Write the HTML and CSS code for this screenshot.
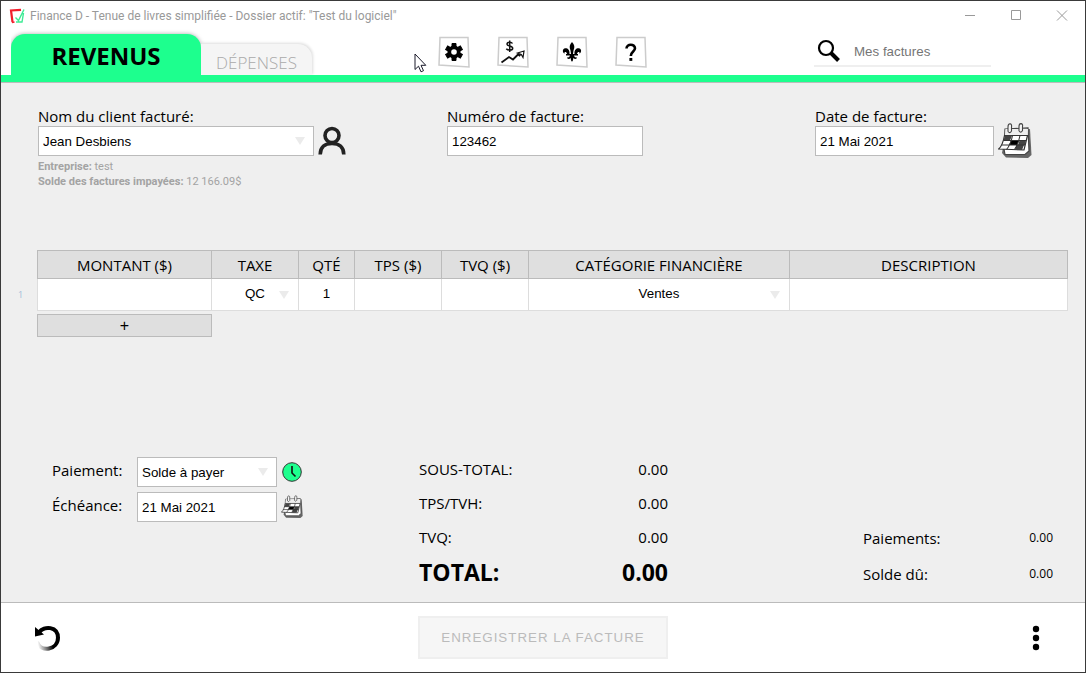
FILE: index.html
```html
<!DOCTYPE html>
<html lang="fr">
<head>
<meta charset="utf-8">
<title>Finance D - Tenue de livres simplifiée</title>
<link rel="stylesheet" href="styles.css">
</head>
<body>
<svg width="0" height="0" class="defs" aria-hidden="true">
  <symbol id="calendar" viewBox="0 0 34 36">
    <path d="M8 8 L32 6 L33.500 32 L30 35 L8 34.500 L4 30 Z" fill="#666"/>
    <path d="M7 6 L30 5 L31 28 L27 31.500 L7 31.500 L6 26 Z" fill="#fff" stroke="#444" stroke-width="1.200"/>
    <path d="M7.500 6 H30 L29.500 13 H7 Z" fill="#efefef"/>
    <path d="M6.500 12.500 H29.500 L26 27 L0.700 26 C4 23 5.500 18 6.500 12.500 Z" fill="#fff" stroke="#333" stroke-width="1.200"/>
    <path d="M7 12.500 h7 l-2 5 h-6.500 Z M18.500 22 h7.500 l-2 5 h-7 Z M21.500 17.500 h6.500 l-1 4.500 h-7 Z" fill="#444"/>
    <path d="M13 17.500 h8 l-2 4.500 h-8 Z" fill="#000"/>
    <path d="M5.500 17.500 H28 M3.500 22 H27 M14.500 12.500 C13.500 18 11.500 23 8.500 26.500 M22 12.500 C21 18 19 23 16.500 26.500" fill="none" stroke="#333" stroke-width="1.100"/>
    <path d="M10 8.500 V4 Q10 0.800 12 0.800 Q14 1 13.500 4 V8 Q12 11 10 8.500 M21 8 V3.500 Q21 0.600 23 0.600 Q25 0.800 24.500 3.500 V7.500 Q23 10.500 21 8" fill="#f4f4f4" stroke="#444" stroke-width="1.100"/>
  </symbol>
</svg>
<div class="window">
  <div class="titlebar">
    <svg class="logo" width="16" height="16" viewBox="0 0 16 16" aria-hidden="true">
      <path d="M3.500 14 L2 2.500 L12 1.800" fill="none" stroke="#f21d2b" stroke-width="2.200"/>
      <path d="M3 14.500 L5.500 14" stroke="#f21d2b" stroke-width="1.500"/>
      <path d="M6.500 9.500 L9.500 12.500 L15 1.500 M7 14 H13 L14.500 5" fill="none" stroke="#3ceb94" stroke-width="1.400"/>
    </svg>
    <span class="title">Finance D - Tenue de livres simplifiée - Dossier actif: "Test du logiciel"</span>
    <button class="win-btn" type="button" aria-label="Réduire"><svg width="12" height="12" viewBox="0 0 12 12"><path d="M1 5.500 H11"/></svg></button>
    <button class="win-btn" type="button" aria-label="Agrandir"><svg width="12" height="12" viewBox="0 0 12 12"><path d="M1.500 0.500 H10.500 V9.500 H1.500 Z"/></svg></button>
    <button class="win-btn" type="button" aria-label="Fermer"><svg width="12" height="12" viewBox="0 0 12 12"><path d="M1 0.500 L11 10.500 M11 0.500 L1 10.500"/></svg></button>
  </div>

  <header class="header">
    <nav class="tabs">
      <a class="tab active" href="#revenus">REVENUS</a>
      <a class="tab" href="#depenses">DÉPENSES</a>
    </nav>
    <div class="tools">
      <button class="tool" type="button" aria-label="Paramètres"><svg width="32" height="32" viewBox="0 0 32 32">
        <path class="card" d="M2 1.500 L30 1.500 L31 31 L1 29 Z"/>
        <g transform="translate(16 16)"><path d="M-2 -8.500 H2 V8.500 H-2 Z" stroke="#000" stroke-width="1"/><path d="M-2 -8.500 H2 V8.500 H-2 Z" stroke="#000" stroke-width="1" transform="rotate(60)"/><path d="M-2 -8.500 H2 V8.500 H-2 Z" stroke="#000" stroke-width="1" transform="rotate(120)"/><circle r="6.500"/><circle r="2.800" fill="#fff"/></g>
      </svg></button>
      <button class="tool" type="button" aria-label="Rapports"><svg width="32" height="32" viewBox="0 0 32 32">
        <path class="card" d="M2 1.500 L30 1.500 L31 31 L1 29 Z"/>
        <path d="M15.500 7.500 C14.500 5.700 10 5.500 10 8.200 C10 10.500 15.700 9.500 15.700 12.200 C15.700 14.800 10.500 14.500 9.300 12.800 M12.700 4.500 V16" fill="none" stroke="#111" stroke-width="1.500"/>
        <path d="M4.500 26.500 L12 21 L16 23.500 L21 18.500 L22.500 19.500 L25 16.500" fill="none" stroke="#111" stroke-width="1.800"/>
        <path d="M20.500 17 L27 15 L26 21.500 L24.300 18.500 Z" fill="#fff" stroke="#111" stroke-width="1.200"/>
      </svg></button>
      <button class="tool" type="button" aria-label="Québec"><svg width="32" height="32" viewBox="0 0 32 32">
        <path class="card" d="M2 1.500 L30 1.500 L31 31 L1 29 Z"/>
        <path d="M16 6 C18.500 9 19 11 17.500 14.500 L17 18 H18.500 C18 14 20.500 12 22.800 12.300 C25.500 12.700 26 16 23.500 17.800 C24 15.500 21.500 15.500 21 18 H22 V19.600 H18 C18.500 21.500 20 22 21 21.200 C21 23 19 23.500 17.200 22 C17.200 23.500 17 25 16 25.800 C15 25 14.800 23.500 14.800 22 C13 23.500 11 23 11 21.200 C12 22 13.500 21.500 14 19.600 H10 V18 H11 C10.500 15.500 8 15.500 8.500 17.800 C6 16 6.500 12.700 9.200 12.300 C11.500 12 14 14 13.500 18 H15 L14.500 14.500 C13 11 13.500 9 16 6 Z"/>
      </svg></button>
      <button class="tool" type="button" aria-label="Aide"><svg width="32" height="32" viewBox="0 0 32 32">
        <path class="card" d="M2 1.500 L30 1.500 L31 31 L1 29 Z"/>
        <path d="M11.500 12.500 C11.500 7.500 20 7.500 20 12.300 C20 15.500 15.800 15.500 15.800 20" fill="none" stroke="#000" stroke-width="2.600"/><path d="M14.400 22 h2.900 v2.900 h-2.900 Z"/>
      </svg></button>
      <svg class="cursor" width="13" height="20" viewBox="0 0 13 20" aria-hidden="true"><path d="M1 1 V16.500 L4.500 13.200 L7 18.800 L9.500 17.700 L7 12.300 H11.800 Z" fill="#fff" stroke="#1a1a2a" stroke-width="1"/></svg>
    </div>
    <label class="search">
      <svg width="24" height="24" viewBox="0 0 24 24" aria-hidden="true"><circle cx="9" cy="9" r="7" fill="none" stroke="#000" stroke-width="2.200"/><path d="M14 14 L21.500 21.500" stroke="#000" stroke-width="4"/></svg>
      <input type="search" placeholder="Mes factures" aria-label="Mes factures">
    </label>
  </header>

  <main class="main">
    <section class="invoice">
      <div class="group">
        <label for="client">Nom du client facturé:</label>
        <div class="line">
          <span class="select client"><select id="client" class="field"><option>Jean Desbiens</option></select></span>
          <button class="icon-btn" type="button" aria-label="Client"><svg width="28" height="30" viewBox="0 0 28 30"><circle cx="14" cy="9.500" r="7" fill="none" stroke="#222" stroke-width="3.600"/><path d="M2.200 28.500 C2.200 21 7 17.500 14 17.500 C21 17.500 25.800 21 25.800 28.500" fill="none" stroke="#222" stroke-width="3.600"/></svg></button>
        </div>
        <p class="hint first"><b>Entreprise:</b> test</p>
        <p class="hint"><b>Solde des factures impayées:</b> 12 166.09$</p>
      </div>
      <div class="group">
        <label for="numero">Numéro de facture:</label>
        <div class="line"><input id="numero" class="field numero" type="text" value="123462"></div>
      </div>
      <div class="group">
        <label for="date">Date de facture:</label>
        <div class="line">
          <input id="date" class="field date" type="text" value="21 Mai 2021">
          <button class="icon-btn" type="button" aria-label="Choisir la date"><svg width="34" height="36"><use href="#calendar"/></svg></button>
        </div>
      </div>
    </section>

    <section class="items">
      <table class="table">
        <colgroup><col class="c-num"><col class="c-amount"><col class="c-tax"><col class="c-qty"><col class="c-tax"><col class="c-tax"><col class="c-cat"><col></colgroup>
        <thead>
          <tr><td class="num"></td><th>MONTANT ($)</th><th>TAXE</th><th>QTÉ</th><th>TPS ($)</th><th>TVQ ($)</th><th>CATÉGORIE FINANCIÈRE</th><th>DESCRIPTION</th></tr>
        </thead>
        <tbody>
          <tr>
            <td class="num">1</td>
            <td><input class="cell" type="text" aria-label="Montant"></td>
            <td><span class="select"><select class="cell" aria-label="Taxe"><option>QC</option></select></span></td>
            <td><input class="cell" type="text" value="1" aria-label="Quantité"></td>
            <td><input class="cell" type="text" aria-label="TPS"></td>
            <td><input class="cell" type="text" aria-label="TVQ"></td>
            <td><span class="select"><select class="cell" aria-label="Catégorie financière"><option>Ventes</option></select></span></td>
            <td><input class="cell" type="text" aria-label="Description"></td>
          </tr>
        </tbody>
      </table>
      <button class="add" type="button" aria-label="Ajouter une ligne">+</button>
    </section>

    <section class="summary">
      <div class="payment">
        <label for="paiement">Paiement:</label>
        <span class="select"><select id="paiement" class="field"><option>Solde à payer</option></select></span>
        <button class="icon-btn" type="button" aria-label="Délai"><svg width="22" height="22" viewBox="0 0 22 22"><circle cx="11" cy="11" r="9.300" fill="#1dff8e" stroke="#333" stroke-width="1"/><path d="M11 5 V12 L14.500 15.500" fill="none" stroke="#111" stroke-width="1.600"/></svg></button>
        <label for="echeance">Échéance:</label>
        <input id="echeance" class="field" type="text" value="21 Mai 2021">
        <button class="icon-btn" type="button" aria-label="Choisir l'échéance"><svg width="22" height="24"><use href="#calendar"/></svg></button>
      </div>
      <dl class="totals">
        <div><dt>SOUS-TOTAL:</dt><dd>0.00</dd></div>
        <div><dt>TPS/TVH:</dt><dd>0.00</dd></div>
        <div><dt>TVQ:</dt><dd>0.00</dd></div>
        <div class="grand"><dt>TOTAL:</dt><dd>0.00</dd></div>
      </dl>
      <dl class="balance">
        <div><dt>Paiements:</dt><dd>0.00</dd></div>
        <div><dt>Solde dû:</dt><dd>0.00</dd></div>
      </dl>
    </section>
  </main>

  <footer class="footer">
    <button class="icon-btn" type="button" aria-label="Annuler"><svg width="28" height="28" viewBox="0 0 28 28">
      <defs><linearGradient id="fade" gradientUnits="userSpaceOnUse" x1="19" y1="18" x2="5" y2="21"><stop offset="0" stop-color="#000"/><stop offset="1" stop-color="#000" stop-opacity="0"/></linearGradient></defs>
      <path d="M6 8.500 C11 1.500 25 2 25 14" fill="none" stroke="#000" stroke-width="4"/>
      <path d="M25 13.500 C25 26 8 29 4 18" fill="none" stroke="url(#fade)" stroke-width="4"/>
      <path d="M2 3 L11 10.500 L2 12.500 Z"/>
    </svg></button>
    <button class="save" type="button" disabled>ENREGISTRER LA FACTURE</button>
    <button class="icon-btn more" type="button" aria-label="Plus d'options"><svg width="8" height="26" viewBox="0 0 8 26"><circle cx="4" cy="4" r="3.200"/><circle cx="4" cy="13" r="3.200"/><circle cx="4" cy="22" r="3.200"/></svg></button>
  </footer>
</div>
</body>
</html>
```

FILE: styles.css
```css
* { box-sizing: border-box; }

body {
  margin: 0;
  font-family: "Open Sans", "Noto Sans", sans-serif;
  font-size: 15px;
  line-height: 20px;
  color: #000;
}

button, input, select {
  margin: 0;
  padding: 0;
  border: 0;
  background: none;
  font-family: "Liberation Sans", sans-serif;
  color: inherit;
}

svg { display: block; }
p, dl, dd { margin: 0; }
.defs { position: absolute; }

.window {
  display: flex;
  flex-direction: column;
  min-height: 100vh;
  border: 1px solid #3a3a3a;
  background: #fff;
}

/* Title bar */
.titlebar {
  display: flex;
  align-items: center;
  height: 30px;
  padding-left: 8px;
}
.title {
  flex: 1;
  margin-left: 5px;
  font-family: Roboto, sans-serif;
  font-size: 12px;
  color: #999;
}
.win-btn {
  display: grid;
  place-items: center;
  width: 46px;
  height: 30px;
}
.win-btn path { fill: none; stroke: #999; }

/* Header */
.header {
  display: grid;
  grid-template-columns: 1fr auto 1fr;
  height: 52px;
  padding: 0 2px 7px 0;
  border-bottom: 1px solid #bbb;
  box-shadow: inset 0 -7px #1dff8e;
}
.tabs {
  display: flex;
  align-items: flex-end;
  padding-left: 10px;
}
.tab {
  display: grid;
  place-items: center;
  width: 111px;
  height: 31px;
  padding-top: 6px;
  border-radius: 0 14px 0 0;
  background: #f5f5f5;
  box-shadow: 1px -1px 3px #ddd;
  clip-path: inset(-5px -5px 0 0);
  font-size: 17px;
  font-weight: 300;
  color: #aaa;
  text-decoration: none;
}
.tab.active {
  width: 190px;
  height: 41px;
  padding-top: 3px;
  border-radius: 14px 14px 0 0;
  background: #1dff8e;
  box-shadow: 0 0 4px #aaa;
  font-size: 24px;
  font-weight: 700;
  color: #000;
}
.tools {
  position: relative;
  display: flex;
  align-items: flex-start;
  gap: 27px;
  padding-top: 5px;
}
.card { fill: #fff; stroke: #ccc; stroke-width: 1.5; }
.cursor {
  position: absolute;
  left: -24px;
  top: 22px;
}
.search {
  display: flex;
  align-items: center;
  justify-self: end;
  width: 177px;
  height: 33px;
  margin: 3px 92px 0 0;
  padding: 2px 0 0 3px;
  border-bottom: 2px solid #efefef;
}
.search input {
  flex: 1;
  min-width: 0;
  margin-left: 13px;
  padding-top: 2px;
  outline: 0;
}
.search input::placeholder { color: #757575; }

/* Form */
.main {
  flex: 1;
  display: flex;
  flex-direction: column;
  padding: 23px 17px 10px;
  background: #efefef;
}
.invoice {
  display: grid;
  grid-template-columns: 409fr 368fr 253fr;
  padding-left: 20px;
}
.group label { display: block; }
.line {
  display: flex;
  align-items: center;
  gap: 4px;
  height: 30px;
}
.field {
  display: block;
  width: 100%;
  height: 30px;
  padding: 0 4px;
  border: 1px solid #bbb;
  border-radius: 0;
  background: #fff;
  appearance: none;
}
.client { width: 276px; }
.field.numero { width: 196px; }
.field.date { width: 179px; }
.select { position: relative; display: block; }
.select::after {
  content: "";
  position: absolute;
  top: 50%;
  right: 9px;
  margin-top: -4px;
  border: 5px solid transparent;
  border-top: 8px solid #ebebeb;
  border-bottom: 0;
  pointer-events: none;
}
.hint {
  font-family: Roboto, sans-serif;
  font-size: 11px;
  line-height: 15px;
  color: #a3a3a3;
}
.hint.first { margin-top: 3px; }

/* Line items */
.items { margin-top: 61px; }
.table {
  width: 100%;
  table-layout: fixed;
  border-spacing: 0;
}
.c-num { width: 19px; }
.c-amount { width: 174px; }
.c-tax { width: 87px; }
.c-qty { width: 56px; }
.c-cat { width: 261px; }
.table th {
  height: 29px;
  padding: 0;
  border: 1px solid #bbb;
  border-right-width: 0;
  background: #dfdfdf;
  font-weight: 400;
}
.table td {
  padding: 0;
  border: 1px solid #ddd;
  border-width: 0 0 1px 1px;
  background: #fff;
}
.table th:last-child, .table td:last-child { border-right-width: 1px; }
.table td.num {
  border: 0;
  background: none;
  font-size: 9px;
  color: #a4bcd8;
}
.cell {
  display: block;
  width: 100%;
  height: 31px;
  padding-bottom: 2px;
  text-align: center;
  text-align-last: center;
  appearance: none;
}
.add {
  display: block;
  width: 175px;
  height: 23px;
  margin: 3px 0 0 19px;
  border: 1px solid #bbb;
  background: #dfdfdf;
  font-size: 16px;
}

/* Summary */
.summary {
  display: grid;
  grid-template-columns: 367fr 444fr 190fr;
  margin-top: auto;
  padding: 0 15px 0 34px;
}
.payment {
  display: grid;
  grid-template-columns: 81px 140px 22px;
  align-content: start;
  align-items: center;
  gap: 5px 4px;
  padding-top: 5px;
}
.payment label { padding-bottom: 4px; }
.totals {
  width: 249px;
  padding-bottom: 2px;
}
.totals div, .balance div {
  display: flex;
  align-items: center;
  justify-content: space-between;
  height: 34px;
}
.totals .grand {
  height: 36px;
  font-size: 23px;
  font-weight: 700;
}
.balance { align-self: end; }
.balance div { height: 36px; }
.balance dd { font-size: 12px; }

/* Footer */
.footer {
  display: grid;
  grid-template-columns: 1fr auto 1fr;
  align-items: center;
  height: 70px;
  padding: 0 32px;
  border-top: 1px solid #bbb;
}
.save {
  width: 250px;
  height: 43px;
  border: 2px solid #efefef;
  background: #f6f6f6;
  color: #bbb;
  letter-spacing: 1px;
}
.icon-btn { justify-self: start; }
.more { justify-self: end; margin-right: 13px; }
```
